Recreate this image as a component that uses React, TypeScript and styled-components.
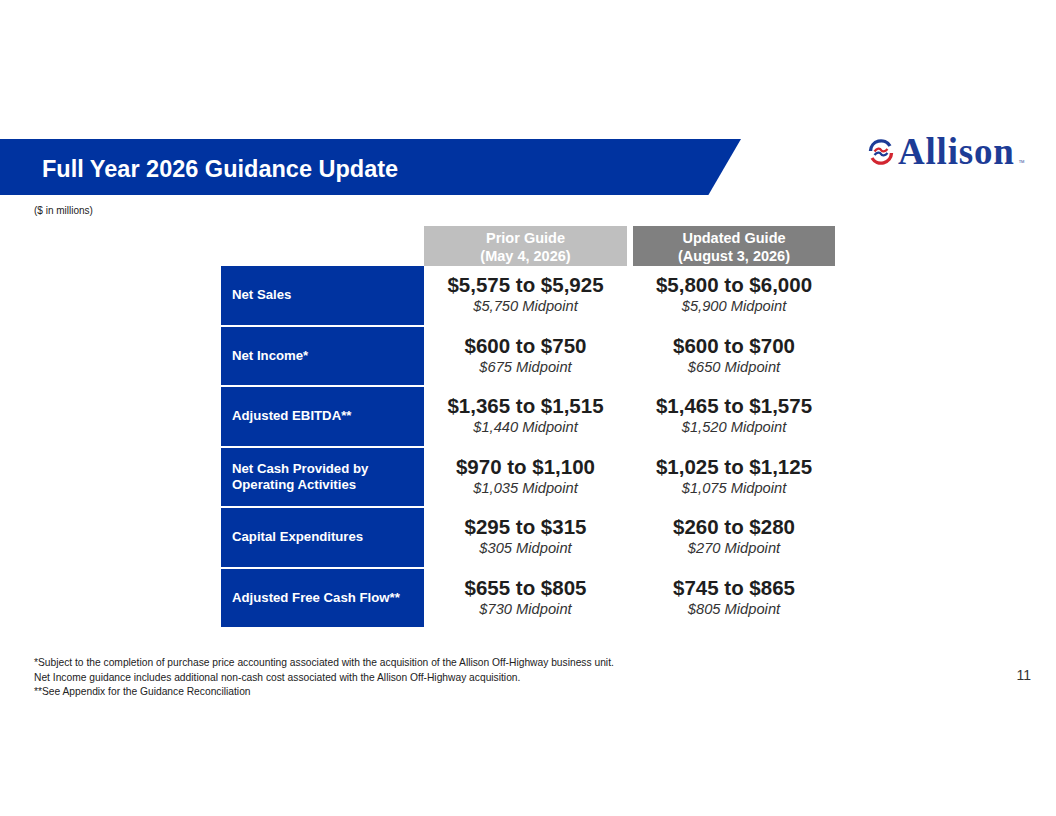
import React from 'react';
import styled, { createGlobalStyle } from 'styled-components';

const GlobalStyle = createGlobalStyle`
  html, body {
    margin: 0;
    padding: 0;
    background: #fff;
  }
  body {
    font-family: "Liberation Sans", Arial, sans-serif;
  }
`;

const BLUE = '#0033a0';

const Page = styled.div`
  width: 1056px;
  height: 816px;
  padding-top: 139px;
  box-sizing: border-box;
  overflow: hidden;
`;

const TopRow = styled.div`
  display: flex;
  align-items: flex-start;
`;

const Banner = styled.div`
  width: 741px;
  height: 56px;
  background: ${BLUE};
  clip-path: polygon(0 0, 100% 0, 95.6% 100%, 0 100%);
  display: flex;
  align-items: center;
  padding-left: 42px;
  box-sizing: border-box;
`;

const Title = styled.h1`
  margin: 4px 0 0;
  color: #fff;
  font-size: 23.5px;
  font-weight: bold;
`;

const Logo = styled.div`
  margin-left: 127px;
  margin-top: -6px;
  display: flex;
  align-items: center;
  gap: 4px;
`;

const LogoWord = styled.span`
  font-family: "Liberation Serif", "Times New Roman", serif;
  font-weight: bold;
  font-size: 37px;
  color: #1d3c96;
  letter-spacing: 0.8px;
  line-height: 1;
`;

const Tm = styled.span`
  font-size: 4px;
  color: #1d3c96;
  align-self: flex-end;
  margin-bottom: 6px;
`;

const Units = styled.div`
  margin: 10px 0 0 34px;
  font-size: 10px;
  color: #222;
`;

const Table = styled.div`
  margin: 10px 0 0 221px;
  display: grid;
  grid-template-columns: 203px 203px 208px;
  width: 614px;
`;

const HeadBlank = styled.div``;

const HeadCell = styled.div<{ $tone: 'light' | 'dark' }>`
  height: 40px;
  background: ${(p) => (p.$tone === 'light' ? '#bfbfbf' : '#808080')};
  margin-left: ${(p) => (p.$tone === 'dark' ? '6px' : '0')};
  color: #fff;
  font-weight: bold;
  font-size: 14.5px;
  line-height: 18px;
  padding-top: 1px;
  box-sizing: border-box;
  text-align: center;
  display: flex;
  flex-direction: column;
  justify-content: center;
`;

const Label = styled.div`
  height: 58.5px;
  background: ${BLUE};
  margin-bottom: 2px;
  color: #fff;
  font-weight: bold;
  font-size: 13.2px;
  line-height: 16px;
  padding-left: 11px;
  display: flex;
  align-items: center;
  white-space: pre-line;
`;

const ValueCell = styled.div<{ $shift?: boolean }>`
  height: 58.5px;
  margin-bottom: 2px;
  margin-left: ${(p) => (p.$shift ? '6px' : '0')};
  display: flex;
  flex-direction: column;
  align-items: center;
  justify-content: center;
  padding-bottom: 1px;
  box-sizing: border-box;
`;

const Range = styled.div`
  font-weight: bold;
  font-size: 20.5px;
  line-height: 23px;
  color: #1e1e1e;
`;

const Mid = styled.div`
  font-style: italic;
  font-size: 14.7px;
  line-height: 20px;
  color: #333;
`;

const Bottom = styled.div`
  display: flex;
  justify-content: space-between;
  align-items: flex-start;
  margin: 27px 0 0 34px;
  width: 997px;
`;

const Notes = styled.div`
  font-size: 10.25px;
  line-height: 14.5px;
  color: #222;
`;

const PageNum = styled.div`
  font-size: 14px;
  color: #333;
  margin-top: 11px;
`;

const rows = [
  { label: 'Net Sales', prior: ['$5,575 to $5,925', '$5,750 Midpoint'], upd: ['$5,800 to $6,000', '$5,900 Midpoint'] },
  { label: 'Net Income*', prior: ['$600 to $750', '$675 Midpoint'], upd: ['$600 to $700', '$650 Midpoint'] },
  { label: 'Adjusted EBITDA**', prior: ['$1,365 to $1,515', '$1,440 Midpoint'], upd: ['$1,465 to $1,575', '$1,520 Midpoint'] },
  { label: 'Net Cash Provided by\nOperating Activities', prior: ['$970 to $1,100', '$1,035 Midpoint'], upd: ['$1,025 to $1,125', '$1,075 Midpoint'] },
  { label: 'Capital Expenditures', prior: ['$295 to $315', '$305 Midpoint'], upd: ['$260 to $280', '$270 Midpoint'] },
  { label: 'Adjusted Free Cash Flow**', prior: ['$655 to $805', '$730 Midpoint'], upd: ['$745 to $865', '$805 Midpoint'] },
];

const LogoMark = () => (
  <svg width="26" height="26" viewBox="0 0 26 26">
    <path d="M2.5 12 A10.5 10.5 0 0 1 22 7" fill="none" stroke="#1d3c96" strokeWidth="3.4" />
    <path d="M23.5 14 A10.5 10.5 0 0 1 4 19" fill="none" stroke="#d22630" strokeWidth="3.4" />
    <path d="M6.5 12.5 C9 9, 12 9, 13 11 C14 13, 17 13, 19.5 10" fill="none" stroke="#d22630" strokeWidth="2.3" />
    <path d="M6.5 16 C9 13, 12 13, 13 15 C14 17, 17 17, 19.5 14" fill="none" stroke="#1d3c96" strokeWidth="2.3" />
  </svg>
);

const App: React.FC = () => (
  <>
    <GlobalStyle />
    <Page>
      <TopRow>
        <Banner>
          <Title>Full Year 2026 Guidance Update</Title>
        </Banner>
        <Logo>
          <LogoMark />
          <LogoWord>Allison</LogoWord>
          <Tm>TM</Tm>
        </Logo>
      </TopRow>
      <Units>($ in millions)</Units>
      <Table>
        <HeadBlank />
        <HeadCell $tone="light">
          <span>Prior Guide</span>
          <span>(May 4, 2026)</span>
        </HeadCell>
        <HeadCell $tone="dark">
          <span>Updated Guide</span>
          <span>(August 3, 2026)</span>
        </HeadCell>
        {rows.map((r) => (
          <React.Fragment key={r.label}>
            <Label>{r.label}</Label>
            <ValueCell>
              <Range>{r.prior[0]}</Range>
              <Mid>{r.prior[1]}</Mid>
            </ValueCell>
            <ValueCell $shift>
              <Range>{r.upd[0]}</Range>
              <Mid>{r.upd[1]}</Mid>
            </ValueCell>
          </React.Fragment>
        ))}
      </Table>
      <Bottom>
        <Notes>
          *Subject to the completion of purchase price accounting associated with the acquisition of the Allison Off-Highway business unit.
          <br />
          Net Income guidance includes additional non-cash cost associated with the Allison Off-Highway acquisition.
          <br />
          **See Appendix for the Guidance Reconciliation
        </Notes>
        <PageNum>11</PageNum>
      </Bottom>
    </Page>
  </>
);

export default App;
